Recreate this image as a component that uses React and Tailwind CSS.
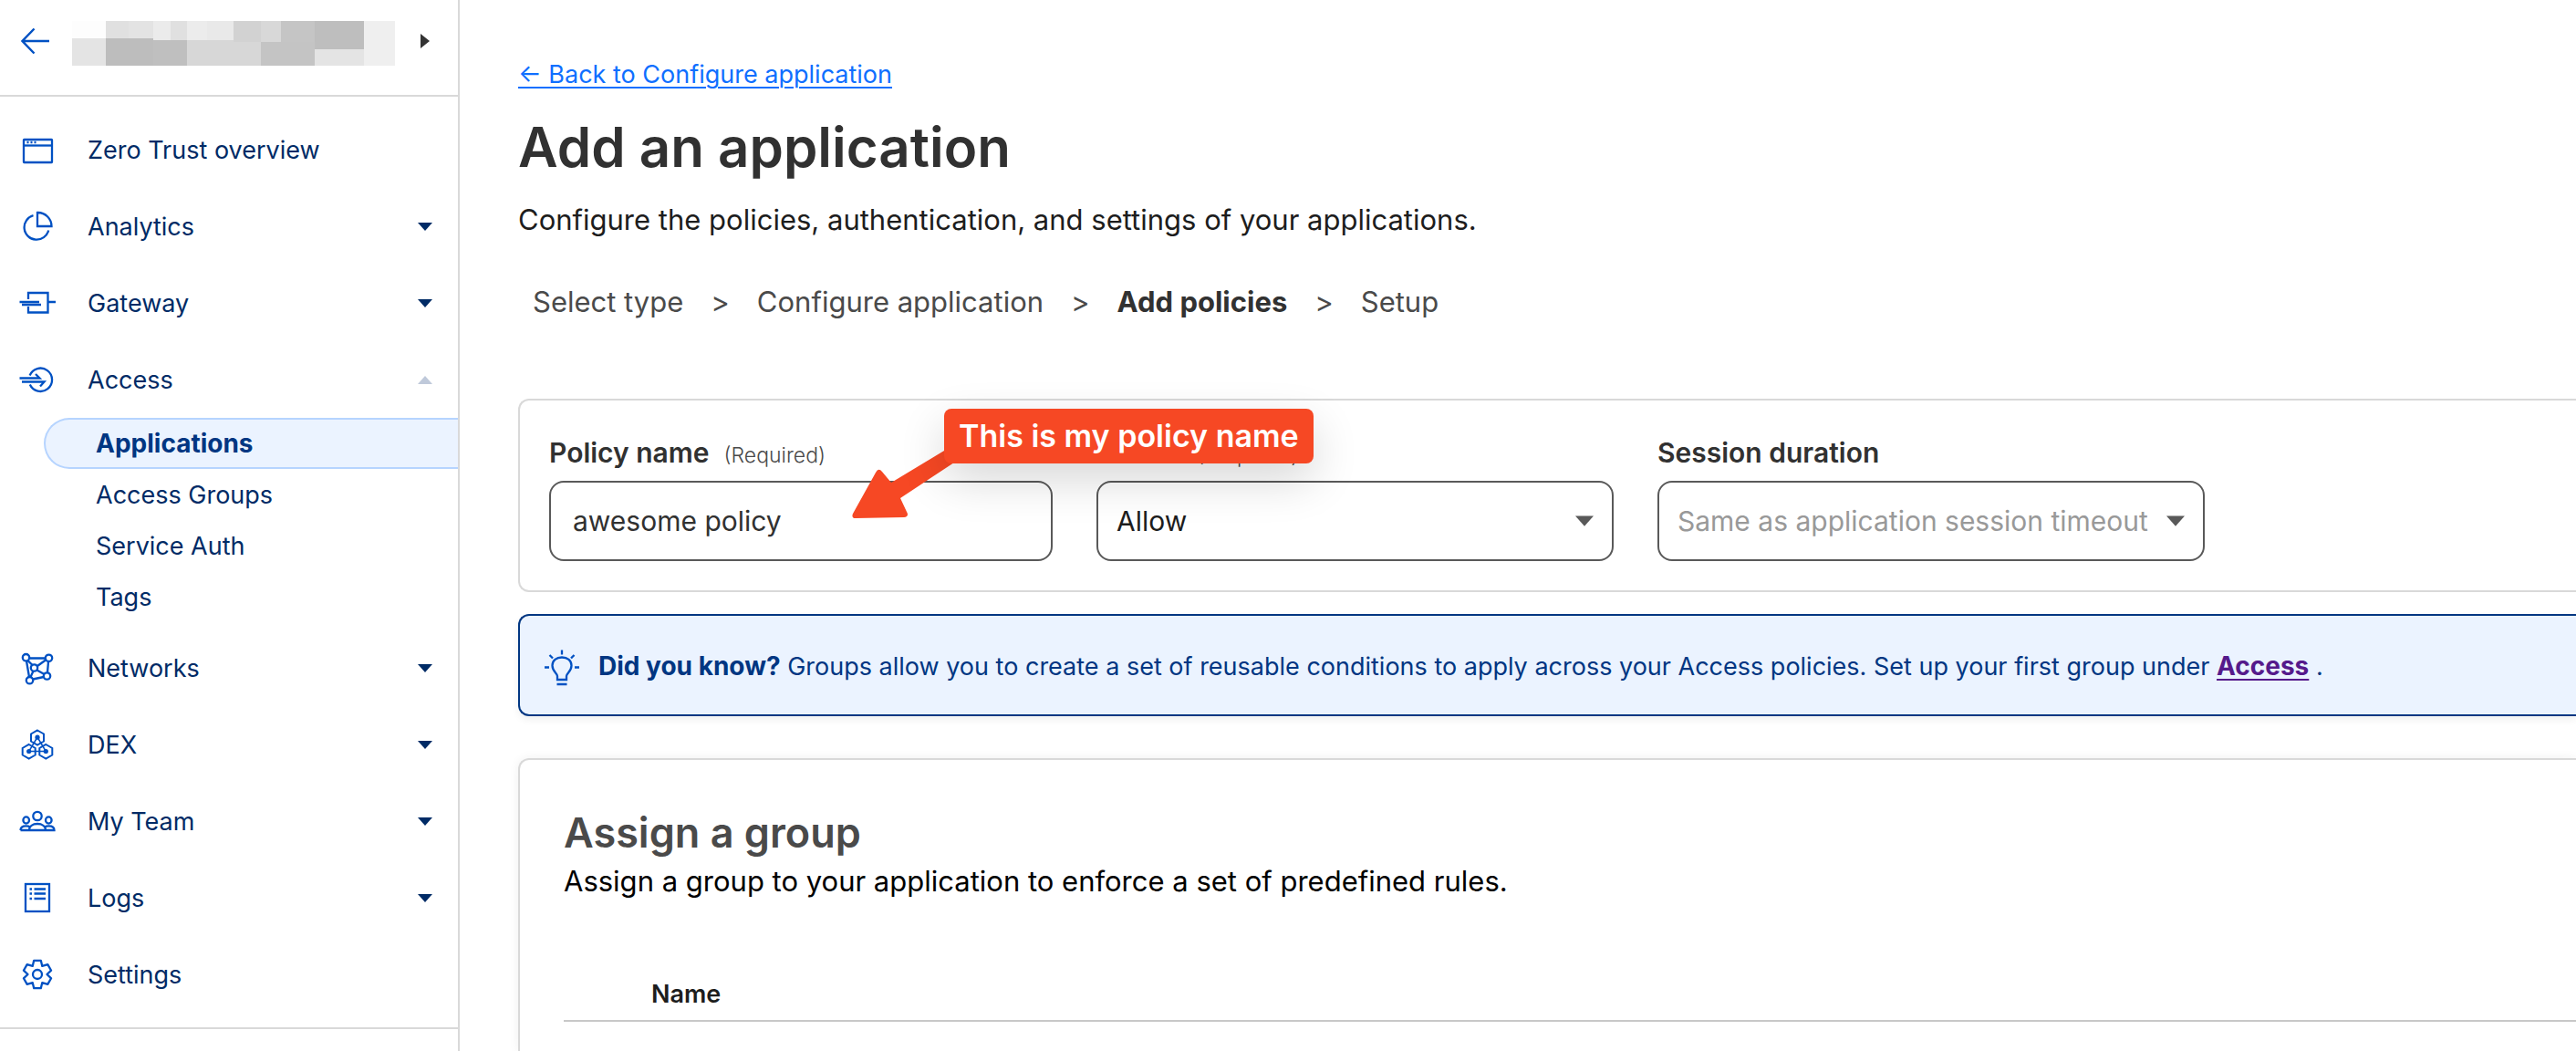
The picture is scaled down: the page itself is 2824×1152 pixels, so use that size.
const ICON_PROPS = {
  viewBox: "0 0 40 40",
  fill: "none",
  stroke: "currentColor",
  strokeWidth: 2.3,
  "aria-hidden": true,
  className: "size-10 shrink-0 text-[#0051c3]",
};

function OverviewIcon() {
  return (
    <svg {...ICON_PROPS}>
      <rect x="5" y="9" width="31" height="25" rx="0.5" />
      <path d="M5 15.5H36" />
      <path d="M8.5 12h2M12.5 12h2M16.5 12h2" />
    </svg>
  );
}

function AnalyticsIcon() {
  return (
    <svg {...ICON_PROPS}>
      <path d="M20 5V20H35.5A15 15 0 0 0 20 5Z" />
      <path d="M15.5 8.2A13.5 13.5 0 1 0 32.2 24.5" />
    </svg>
  );
}

function GatewayIcon() {
  return (
    <svg {...ICON_PROPS}>
      <path d="M10 16V9H31.5V30.500H10V24" />
      <path d="M0.500 19H22M3 22H24M32 19H40" />
    </svg>
  );
}

function AccessIcon() {
  return (
    <svg {...ICON_PROPS}>
      <path d="M11.600 15.500A12.700 12.700 0 1 1 11.800 25.500" />
      <path d="M0.500 18.500H22.500L18 14M3 22.500H27.500L23 27.500" />
    </svg>
  );
}

function NetworksIcon() {
  return (
    <svg {...ICON_PROPS}>
      <path d="M11.500 9.500H28.500M8 12.500L11 30M32 13.500L31 25M15 32.500L27 30M9.500 12L14.500 17M20 18L29 11.500M19.500 22.500L27.500 27M15.500 23.500L12.500 30" />
      <circle cx="7.500" cy="8.700" r="3.700" />
      <circle cx="32.500" cy="9.300" r="3.700" />
      <circle cx="16.500" cy="20" r="3.700" />
      <circle cx="30.500" cy="29" r="3.700" />
      <circle cx="11.500" cy="33.700" r="3.700" />
    </svg>
  );
}

function DexIcon() {
  return (
    <svg {...ICON_PROPS} strokeWidth="2">
      <path d="M20 4.500L27 8.500V16.500L20 20.500L13 16.500V8.500ZM10.700 20L17.700 24V31.500L10.700 35.500L3.700 31.500V24ZM29.300 20L36.300 24V31.500L29.300 35.500L22.300 31.500V24Z" />
      <path d="M20 12L10.700 27.500H29.300Z" strokeWidth="1.500" />
      <g fill="currentColor" stroke="none">
        <circle cx="20" cy="12.200" r="2.600" />
        <circle cx="10.700" cy="27.500" r="2.600" />
        <circle cx="29.300" cy="27.500" r="2.600" />
      </g>
    </svg>
  );
}

function TeamIcon() {
  return (
    <svg {...ICON_PROPS}>
      <circle cx="20" cy="14.500" r="4.700" />
      <ellipse cx="7.700" cy="19" rx="3.300" ry="3.600" />
      <ellipse cx="32.300" cy="19" rx="3.300" ry="3.600" />
      <path d="M1.500 30H38.500C38.500 26.500 35.500 25.300 32.500 25.300C30.500 25.300 29 25.700 28 26.500M1.500 30C1.500 26.500 4.500 25.300 7.500 25.300C9.500 25.300 11 25.700 12 26.500" />
      <path d="M11 30C11 25.500 15 23 20 23S29 25.500 29 30" />
    </svg>
  );
}

function LogsIcon() {
  return (
    <svg {...ICON_PROPS}>
      <rect x="7" y="5" width="26" height="30" />
      <path d="M11.500 10.500h2.500M11.500 15.500h2.500M11.500 21h2.500M16.500 10.500H29M16.500 15.500H29M16.500 21H29" />
    </svg>
  );
}

function SettingsIcon() {
  return (
    <svg {...ICON_PROPS}>
      <path
        strokeLinejoin="round"
        d="M16.200 4.800H23.800L25.300 10.900L31.300 9.100L35.100 15.700L30.500 20L35.100 24.300L31.300 30.900L25.300 29.100L23.800 35.200H16.200L14.700 29.100L8.700 30.900L4.900 24.300L9.500 20L4.900 15.700L8.700 9.100L14.700 10.900Z"
      />
      <circle cx="20" cy="20" r="5" />
    </svg>
  );
}

function BulbIcon() {
  return (
    <svg viewBox="0 0 40 42" fill="none" stroke="currentColor" strokeWidth="2.3" aria-hidden="true" className="mt-2 h-[42px] w-10 shrink-0 text-[#0051c3]">
      <path d="M15 33V29C15 26 9.500 24 9.500 17.500C9.500 12 14 8.500 20 8.500S30.500 12 30.500 17.500C30.500 24 25 26 25 29V33Z" />
      <path d="M14.500 38H25.500M20 0.500V5.500M1 19.500H6M34 19.500H39M6.500 6L10 9.500M33.500 6L30 9.500" />
    </svg>
  );
}

function Caret({ className, up }) {
  return (
    <svg viewBox="0 0 16 9" aria-hidden="true" className={className}>
      <path d={up ? "M0 9L8 0L16 9Z" : "M0 0H16L8 9Z"} fill="currentColor" />
    </svg>
  );
}

/* Account name, obscured with a mosaic: x, y, width, height, fill. */
const MOSAIC = [
  [0, 0, 37, 19, "#fdfdfd"], [0, 19, 37, 30, "#e4e4e4"],
  [37, 0, 25, 19, "#e0e0e0"], [62, 0, 27, 19, "#e3e3e3"],
  [37, 19, 52, 30, "#bdbdbd"], [89, 0, 19, 21, "#ebebeb"],
  [108, 0, 18, 21, "#e0e0e0"], [89, 21, 37, 28, "#bfbfbf"],
  [126, 0, 22, 21, "#ececec"], [148, 0, 29, 21, "#e9e9e9"],
  [126, 21, 81, 28, "#d7d7d7"], [177, 0, 30, 23, "#d2d2d2"],
  [207, 0, 22, 23, "#d8d8d8"], [229, 0, 37, 23, "#c5c5c5"],
  [207, 23, 59, 26, "#c4c4c4"], [266, 0, 54, 31, "#bebebe"],
  [266, 31, 54, 18, "#e4e4e4"], [320, 0, 34, 49, "#efefef"],
];

const NAV = [
  { label: "Zero Trust overview", icon: OverviewIcon },
  { label: "Analytics", icon: AnalyticsIcon, expandable: true },
  { label: "Gateway", icon: GatewayIcon, expandable: true },
  {
    label: "Access",
    icon: AccessIcon,
    expandable: true,
    children: ["Applications", "Access Groups", "Service Auth", "Tags"],
  },
  { label: "Networks", icon: NetworksIcon, expandable: true },
  { label: "DEX", icon: DexIcon, expandable: true },
  { label: "My Team", icon: TeamIcon, expandable: true },
  { label: "Logs", icon: LogsIcon, expandable: true },
  { label: "Settings", icon: SettingsIcon },
];

function NavItem({ item }) {
  const Icon = item.icon;
  const open = Boolean(item.children);
  const row = "flex h-[84px] w-full items-center gap-[35px] pl-[21px] pr-7 text-left";
  const body = (
    <>
      <Icon />
      <span className="flex-1 pt-0.5">{item.label}</span>
      {item.expandable && (
        <Caret up={open} className={open ? "h-[9px] w-4 text-[#bfc9da]" : "h-[9px] w-4"} />
      )}
    </>
  );
  return (
    <li>
      {item.expandable ? (
        <button type="button" aria-expanded={open} className={row}>{body}</button>
      ) : (
        <a href="#" className={row}>{body}</a>
      )}
      {open && (
        <ul className="mb-2 pl-12">
          {item.children.map((child, i) => (
            <li key={child}>
              <a
                href="#"
                aria-current={i === 0 ? "page" : undefined}
                className={
                  i === 0
                    ? "flex h-14 items-center rounded-l-full border-2 border-r-0 border-[#b6d4ff] bg-[#ebf3ff] pl-[55px] text-[28px] font-bold text-[#003682]"
                    : "flex h-14 items-center pt-0.5 pl-[57px]"
                }
              >
                {child}
              </a>
            </li>
          ))}
        </ul>
      )}
    </li>
  );
}

function Sidebar() {
  return (
    <aside className="w-[504px] shrink-0 border-r-2 border-[#d9d9d9] text-[27px] leading-10 text-[#002b66]">
      <div className="flex h-[106px] items-center gap-[18px] border-b-2 border-[#d9d9d9] pb-3.5 pl-[21px] pr-[31px]">
        <a href="#" aria-label="Back">
          <svg {...ICON_PROPS} strokeWidth="2.500">
            <path d="M33 20H3.500M16.500 6.500L3.500 20L16.500 33.500" />
          </svg>
        </a>
        <svg viewBox="0 0 354 54" shapeRendering="crispEdges" aria-hidden="true" className="h-[54px] w-[354px]">
          {MOSAIC.map(([x, y, w, h, fill]) => (
            <rect key={x + "-" + y} x={x} y={y + 5} width={w} height={h} fill={fill} />
          ))}
        </svg>
        <button type="button" aria-label="Switch account" className="ml-auto text-[#333]">
          <svg viewBox="0 0 10 16" aria-hidden="true" className="h-4 w-2.5">
            <path d="M0 0L10 8L0 16Z" fill="currentColor" />
          </svg>
        </button>
      </div>
      <nav className="border-b-2 border-[#d9d9d9] py-4">
        <ul>
          {NAV.map((item) => (
            <NavItem key={item.label} item={item} />
          ))}
        </ul>
      </nav>
    </aside>
  );
}

const STEPS = ["Select type", "Configure application", "Add policies", "Setup"];

function FieldLabel({ htmlFor, children, required }) {
  return (
    <label htmlFor={htmlFor} className="flex h-10 items-baseline gap-4 text-[30px] leading-10 font-semibold text-[#313131]">
      {children}
      {required && <span className="text-[23px] font-light text-[#4a4a4a]">(Required)</span>}
    </label>
  );
}

const CONTROL = "h-[88px] w-full appearance-none rounded-2xl border-2 border-[#595959] bg-transparent text-[30px] outline-none";

function Callout() {
  return (
    <div className="pointer-events-none absolute -top-7 left-[332px] flex">
      <svg viewBox="0 0 112 80" aria-hidden="true" className="mt-[43px] h-20 w-28 shrink-0">
        <path
          d="M101 3L43 38L33 26Q29 21 26 27L1 72Q-1 77 4 77L57 76Q63 75 60 70L53 55L112 16V3Z"
          fill="#f64824"
        />
      </svg>
      <p className="-ml-[11px] flex h-[60px] items-center rounded-lg bg-[#f64824] px-4 pb-0.5 text-[34px] font-semibold whitespace-nowrap text-white shadow-[0_18px_50px_rgba(0,0,0,0.16)]">
        This is my policy name
      </p>
    </div>
  );
}

function PolicyForm() {
  return (
    <form className="mt-[86px] flex gap-12 rounded-l-xl border-2 border-r-0 border-[#d9d9d9] pt-[37px] pb-8 pl-8">
      <div className="relative z-10 w-[552px]">
        <FieldLabel htmlFor="policy-name" required>Policy name</FieldLabel>
        <input id="policy-name" type="text" defaultValue="awesome policy" className={`mt-[11px] pl-6 text-[#313131] ${CONTROL}`} />
        <Callout />
      </div>
      <div className="w-[567px]">
        <FieldLabel htmlFor="action" required>Action</FieldLabel>
        <div className="relative mt-[11px]">
          <select id="action" className={`px-5 text-[#1d1d1d] ${CONTROL}`}>
            <option>Allow</option>
          </select>
          <Caret className="pointer-events-none absolute top-[38px] right-[22px] h-3 w-5 text-[#595959]" />
        </div>
      </div>
      <div className="w-[600px]">
        <FieldLabel htmlFor="session">Session duration</FieldLabel>
        <div className="relative mt-[11px]">
          <select id="session" className={`pl-5 text-[#999] ${CONTROL}`}>
            <option>Same as application session timeout</option>
          </select>
          <Caret className="pointer-events-none absolute top-[38px] right-[22px] h-3 w-5 text-[#595959]" />
        </div>
      </div>
    </form>
  );
}

export default function App() {
  return (
    <div className="flex h-screen overflow-hidden bg-white font-['Inter',sans-serif]">
      <Sidebar />
      <main className="flex min-w-0 flex-1 flex-col pt-[62px] pl-16">
        <a href="#" className="self-start text-[27px] leading-10 text-[#0f6fff] underline decoration-2 underline-offset-4">
          ← Back to Configure application
        </a>
        <h1 className="mt-[19px] text-[60px] leading-[80px] font-semibold text-[#313131]">Add an application</h1>
        <p className="mt-5 text-[31px] leading-10 text-[#1d1d1d]">
          Configure the policies, authentication, and settings of your applications.
        </p>
        <ol className="mt-[50px] flex gap-[30px] pl-4 text-[31px] leading-10 text-[#4a4a4a]">
          {STEPS.map((step, i) => (
            <li key={step} className="flex gap-[30px]">
              {i > 0 && <span aria-hidden="true">&gt;</span>}
              <span className={step === "Add policies" ? "font-bold text-[#313131]" : ""}>{step}</span>
            </li>
          ))}
        </ol>

        <PolicyForm />

        <section className="mt-6 flex h-28 shrink-0 items-center gap-5 rounded-l-xl border-2 border-r-0 border-[#003682] bg-[#ebf3ff] pl-[26px] text-[27px] leading-10 text-[#003682] shadow-[0_4px_8px_rgba(0,0,0,0.06)]">
          <BulbIcon />
          <p className="pt-0.5">
            <strong className="text-[28px] font-bold">Did you know?</strong> Groups allow you to create a set of reusable conditions to apply across your
            Access policies. Set up your first group under{" "}
            <a href="#" className="text-[28px] font-bold text-[#551a8b] underline decoration-2 underline-offset-4">Access</a> .
          </p>
        </section>

        <section className="mt-[46px] flex-1 rounded-tl-xl border-t-2 border-l-2 border-[#d9d9d9] pt-[50px] pl-12 shadow-[0_0_12px_rgba(0,0,0,0.06)]">
          <h2 className="text-[45px] leading-[60px] font-semibold text-[#4a4a4a]">Assign a group</h2>
          <p className="mt-[3px] text-[31px] leading-10 text-black">Assign a group to your application to enforce a set of predefined rules.</p>
          <table className="mt-[84px] w-full text-left">
            <thead>
              <tr className="border-b-2 border-[#c8c8c8]">
                <th scope="col" className="pb-2 pl-24 text-[27px] leading-10 font-semibold text-[#1d1d1d]">Name</th>
              </tr>
            </thead>
          </table>
        </section>
      </main>
    </div>
  );
}
